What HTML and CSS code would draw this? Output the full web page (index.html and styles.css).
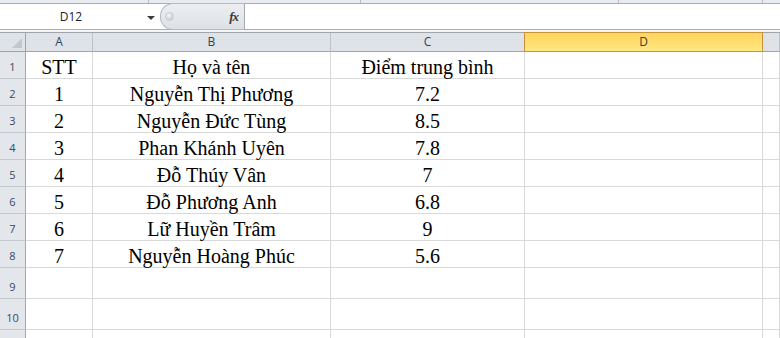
FILE: index.html
```html
<!DOCTYPE html>
<html lang="vi">
<head>
    <meta charset="UTF-8">
    <title>Bảng điểm</title>
    <link rel="stylesheet" href="styles.css">
</head>
<body>
    <div class="ribbon-edge">
        <span class="seg w1"></span>
        <span class="seg w2"></span>
        <span class="seg w3"></span>
        <span class="seg w4"></span>
        <span class="seg last"></span>
    </div>

    <div class="fbar">
        <div class="namebox">
            <span class="ref">D12</span>
            <span class="drop"></span>
        </div>
        <div class="fxbox">
            <span class="grip"></span>
            <span class="fx">fx</span>
        </div>
        <div class="formula"></div>
    </div>
    <div class="gap"></div>

    <div class="sheet">
        <div class="row hdr">
            <div class="rh corner"><span class="tri"></span></div>
            <div class="c ca">A</div>
            <div class="c cb">B</div>
            <div class="c cc">C</div>
            <div class="c cd sel">D</div>
            <div class="c ce"></div>
        </div>
        <div class="row">
            <div class="rh">1</div>
            <div class="c ca">STT</div>
            <div class="c cb">Họ và tên</div>
            <div class="c cc">Điểm trung bình</div>
            <div class="c cd"></div>
            <div class="c ce"></div>
        </div>
        <div class="row">
            <div class="rh">2</div>
            <div class="c ca">1</div>
            <div class="c cb">Nguyễn Thị Phương</div>
            <div class="c cc">7.2</div>
            <div class="c cd"></div>
            <div class="c ce"></div>
        </div>
        <div class="row">
            <div class="rh">3</div>
            <div class="c ca">2</div>
            <div class="c cb">Nguyễn Đức Tùng</div>
            <div class="c cc">8.5</div>
            <div class="c cd"></div>
            <div class="c ce"></div>
        </div>
        <div class="row">
            <div class="rh">4</div>
            <div class="c ca">3</div>
            <div class="c cb">Phan Khánh Uyên</div>
            <div class="c cc">7.8</div>
            <div class="c cd"></div>
            <div class="c ce"></div>
        </div>
        <div class="row">
            <div class="rh">5</div>
            <div class="c ca">4</div>
            <div class="c cb">Đỗ Thúy Vân</div>
            <div class="c cc">7</div>
            <div class="c cd"></div>
            <div class="c ce"></div>
        </div>
        <div class="row">
            <div class="rh">6</div>
            <div class="c ca">5</div>
            <div class="c cb">Đỗ Phương Anh</div>
            <div class="c cc">6.8</div>
            <div class="c cd"></div>
            <div class="c ce"></div>
        </div>
        <div class="row">
            <div class="rh">7</div>
            <div class="c ca">6</div>
            <div class="c cb">Lữ Huyền Trâm</div>
            <div class="c cc">9</div>
            <div class="c cd"></div>
            <div class="c ce"></div>
        </div>
        <div class="row">
            <div class="rh">8</div>
            <div class="c ca">7</div>
            <div class="c cb">Nguyễn Hoàng Phúc</div>
            <div class="c cc">5.6</div>
            <div class="c cd"></div>
            <div class="c ce"></div>
        </div>
        <div class="row tall">
            <div class="rh">9</div>
            <div class="c ca"></div>
            <div class="c cb"></div>
            <div class="c cc"></div>
            <div class="c cd"></div>
            <div class="c ce"></div>
        </div>
        <div class="row tall">
            <div class="rh">10</div>
            <div class="c ca"></div>
            <div class="c cb"></div>
            <div class="c cc"></div>
            <div class="c cd"></div>
            <div class="c ce"></div>
        </div>
        <div class="row tall">
            <div class="rh"></div>
            <div class="c ca"></div>
            <div class="c cb"></div>
            <div class="c cc"></div>
            <div class="c cd"></div>
            <div class="c ce"></div>
        </div>
    </div>
</body>
</html>
```

FILE: styles.css
```css
* {
    box-sizing: border-box;
}
body {
    margin: 0;
    width: 780px;
    height: 338px;
    overflow: hidden;
    background: #fff;
    font-family: "Open Sans", "Liberation Sans", sans-serif;
}

/* strip left over from the ribbon */
.ribbon-edge {
    display: flex;
    height: 3px;
    background: #e8ebef;
}
.seg {
    height: 3px;
    border-right: 1px solid #b9bec5;
}
.w1 { width: 149px; }
.w2 { width: 212px; }
.w3 { width: 258px; }
.w4 { width: 144px; }
.last { flex: 1; border-right: none; }

/* formula bar */
.fbar {
    display: flex;
    height: 27px;
    border-top: 1px solid #a9aeb5;
    border-bottom: 1px solid #a9aeb5;
}
.namebox {
    width: 160px;
    display: flex;
    align-items: center;
    background: #fff;
}
.ref {
    width: 142px;
    text-align: center;
    font-size: 12px;
    color: #1e1e1e;
}
.drop {
    width: 0;
    height: 0;
    margin-left: 5px;
    margin-top: 2px;
    border-left: 4px solid transparent;
    border-right: 4px solid transparent;
    border-top: 4px solid #3c3c3c;
}
.fxbox {
    width: 85px;
    display: flex;
    align-items: center;
    justify-content: space-between;
    padding: 0 6px 0 4px;
    background: linear-gradient(#eceef1, #dde1e6);
    border: 1px solid #b4b9c0;
    border-right-color: #a4aab1;
    border-radius: 13px 0 0 13px;
    margin: -1px 0;
}
.grip {
    width: 9px;
    height: 9px;
    border-radius: 50%;
    background: radial-gradient(circle at 40% 35%, #f7f7f7, #b9bdc2);
    border: 1px solid #c9cdd2;
}
.fx {
    font-family: "Liberation Serif", serif;
    font-style: italic;
    font-weight: bold;
    font-size: 13px;
    color: #3a3a3a;
    letter-spacing: -1px;
}
.formula {
    flex: 1;
    background: #fff;
}
.gap {
    height: 2px;
    background: #f4f5f7;
}

/* grid */
.sheet {
    border-top: 1px solid #9ea5ad;
}
.row {
    display: flex;
    height: 27px;
}
.row.tall {
    height: 31px;
}
.rh {
    width: 26px;
    flex: none;
    display: flex;
    align-items: flex-end;
    justify-content: center;
    padding-bottom: 3px;
    font-size: 11px;
    line-height: 16px;
    color: #394a5e;
    background: #e3e6ea;
    border-right: 1px solid #9ea5ad;
    border-bottom: 1px solid #c4c9cf;
}
.c {
    flex: none;
    display: flex;
    align-items: flex-end;
    justify-content: center;
    font-family: "Liberation Serif", "Times New Roman", serif;
    font-size: 20px;
    line-height: 22px;
    color: #000;
    white-space: nowrap;
    border-right: 1px solid #d9d9d9;
    border-bottom: 1px solid #d9d9d9;
}
.ca { width: 67px; }
.cb { width: 238px; }
.cc { width: 194px; }
.cd { width: 238px; }
.ce { flex: 1; }

.hdr {
    height: 19px;
}
.hdr .rh,
.hdr .c {
    background: #dfe3e8;
    border-right-color: #bcc2c9;
    border-bottom-color: #9ea5ad;
    align-items: center;
    padding-bottom: 0;
    font-family: "Open Sans", "Liberation Sans", sans-serif;
    font-size: 12px;
    line-height: 16px;
    color: #30435a;
}
.hdr .corner {
    position: relative;
    border-right-color: #9ea5ad;
}
.tri {
    position: absolute;
    right: 3px;
    bottom: 3px;
    width: 0;
    height: 0;
    border-left: 10px solid transparent;
    border-bottom: 10px solid #c2c7cd;
}
.hdr .sel {
    width: 239px;
    height: 20px;
    margin-left: -1px;
    margin-top: -1px;
    background: linear-gradient(#ffd45c, #ffe883);
    border: 1px solid #c8923a;
    color: #3c3a30;
}
```
